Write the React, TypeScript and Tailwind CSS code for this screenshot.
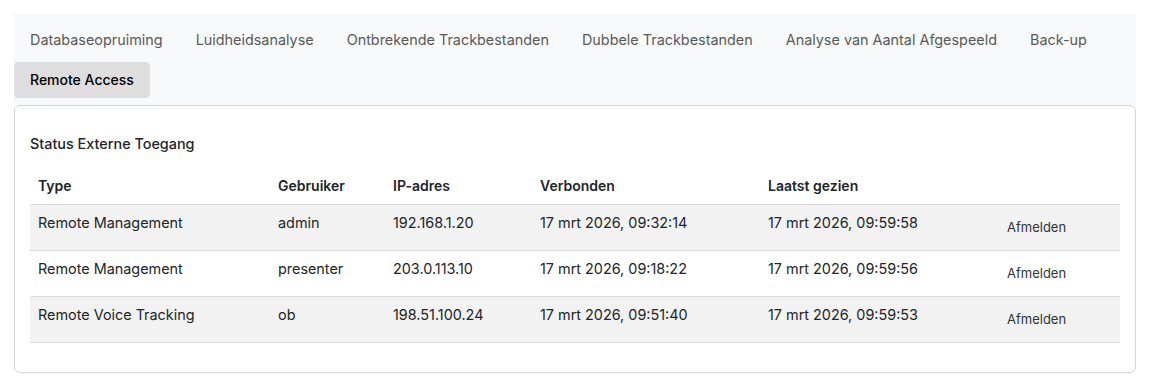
import React from "react";

const tabs = [
  "Databaseopruiming",
  "Luidheidsanalyse",
  "Ontbrekende Trackbestanden",
  "Dubbele Trackbestanden",
  "Analyse van Aantal Afgespeeld",
  "Back-up",
  "Remote Access",
];

const sessions = [
  {
    type: "Remote Management",
    user: "admin",
    ip: "192.168.1.20",
    connected: "17 mrt 2026, 09:32:14",
    lastSeen: "17 mrt 2026, 09:59:58",
  },
  {
    type: "Remote Management",
    user: "presenter",
    ip: "203.0.113.10",
    connected: "17 mrt 2026, 09:18:22",
    lastSeen: "17 mrt 2026, 09:59:56",
  },
  {
    type: "Remote Voice Tracking",
    user: "ob",
    ip: "198.51.100.24",
    connected: "17 mrt 2026, 09:51:40",
    lastSeen: "17 mrt 2026, 09:59:53",
  },
];

const App = () => {
  const active = "Remote Access";

  return (
    <div
      className="bg-white p-[14px] text-[#212529]"
      style={{ fontFamily: "Inter, 'Noto Sans', sans-serif" }}
    >
      {/* Tabs */}
      <div className="flex flex-wrap gap-y-1 bg-[#f8f9fa] pt-2 pb-[7px]">
        {tabs.map((tab) =>
          tab === active ? (
            <button
              key={tab}
              type="button"
              className="h-9 px-4 rounded bg-[#dedede] text-sm font-medium text-black"
            >
              {tab}
            </button>
          ) : (
            <button
              key={tab}
              type="button"
              className="h-9 px-4 mr-[1px] rounded text-[14.4px] text-[#595959]"
            >
              {tab}
            </button>
          )
        )}
      </div>

      {/* Card */}
      <div className="border border-[#d4d4d4] rounded-md bg-white px-[15px] pt-7 pb-[29px]">
        <h3 className="text-[14.4px] font-medium leading-5 mb-[14px]">
          Status Externe Toegang
        </h3>
        <table className="w-full table-fixed border-collapse text-[14.4px]">
          <colgroup>
            <col className="w-[240px]" />
            <col className="w-[115px]" />
            <col className="w-[147px]" />
            <col className="w-[228px]" />
            <col className="w-[231px]" />
            <col />
          </colgroup>
          <thead>
            <tr className="border-b border-[#dcdcdc] text-sm">
              <th className="text-left font-semibold px-2 py-2 leading-5">Type</th>
              <th className="text-left font-semibold px-2 py-2 leading-5">Gebruiker</th>
              <th className="text-left font-semibold px-2 py-2 leading-5">IP-adres</th>
              <th className="text-left font-semibold px-2 py-2 leading-5">Verbonden</th>
              <th className="text-left font-semibold px-2 py-2 leading-5">Laatst gezien</th>
              <th className="px-2 py-2"></th>
            </tr>
          </thead>
          <tbody>
            {sessions.map((s, i) => (
              <tr
                key={i}
                className={
                  i % 2 === 0
                    ? "bg-[#f2f2f2] border-b border-[#dcdcdc]"
                    : "bg-white border-b border-[#dcdcdc]"
                }
              >
                <td className="px-2 py-2 align-top leading-5">{s.type}</td>
                <td className="px-2 py-2 align-top leading-5">{s.user}</td>
                <td className="px-2 py-2 align-top leading-5">{s.ip}</td>
                <td className="px-2 py-2 align-top leading-5">{s.connected}</td>
                <td className="px-2 py-2 align-top leading-5">{s.lastSeen}</td>
                <td className="px-2 py-2 align-top">
                  <button
                    type="button"
                    className="h-[29px] px-2 text-[13px] text-[#333]"
                  >
                    Afmelden
                  </button>
                </td>
              </tr>
            ))}
          </tbody>
        </table>
      </div>
    </div>
  );
};

export default App;
